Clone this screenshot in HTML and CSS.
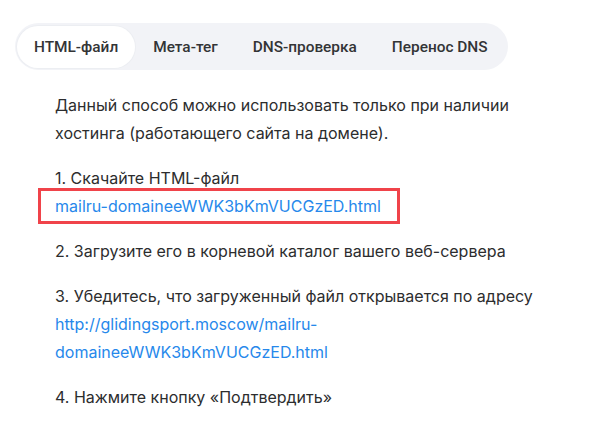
FILE: index.html
```html
<!DOCTYPE html>
<html>
<head>
  <title>Подтверждение домена</title>
  <link rel="stylesheet" href="styles.css">
</head>
<body>
  <div class="page">
    <div class="tabs">
      <div class="tab active">HTML-файл</div>
      <div class="tab">Мета-тег</div>
      <div class="tab">DNS-проверка</div>
      <div class="tab">Перенос DNS</div>
    </div>

    <div class="content">
      <p>Данный способ можно использовать только при наличии<br>хостинга (работающего сайта на домене).</p>
      <p>1. Скачайте HTML-файл<br>
        <a class="link marked" href="#">mailru-domaineeWWK3bKmVUCGzED.html</a></p>
      <p>2. Загрузите его в корневой каталог вашего веб-сервера</p>
      <p>3. Убедитесь, что загруженный файл открывается по адресу<br>
        <a class="link" href="#">http://glidingsport.moscow/mailru-<br>domaineeWWK3bKmVUCGzED.html</a></p>
      <p>4. Нажмите кнопку «Подтвердить»</p>
    </div>
  </div>
</body>
</html>
```

FILE: styles.css
```css
body {
  margin: 0;
  padding: 0;
  background: #ffffff;
  font-family: Inter, "Noto Sans", sans-serif;
  color: #2c2d2e;
}
.page {
  padding: 23px 0 0 15px;
}
.tabs {
  display: inline-flex;
  gap: 1px;
  background-color: #f2f3f7;
  border-radius: 24px;
  padding: 3px 3px 2px 2px;
}
.tab {
  padding: 0 17px;
  height: 42px;
  line-height: 42px;
  font-family: Roboto, "Noto Sans", sans-serif;
  font-size: 15.4px;
  font-weight: 500;
  border-radius: 21px;
  white-space: nowrap;
  color: #333436;
}
.tab.active {
  background-color: #ffffff;
  box-shadow: 0 0 0 1px #eceef2;
}
.content {
  padding: 21px 0 0 40px;
  width: 520px;
}
.content p {
  margin: 0 0 17px;
  font-size: 16px;
  line-height: 28px;
}
.link {
  color: #2688eb;
  text-decoration: none;
}
.marked {
  position: relative;
}
.marked::after {
  content: "";
  position: absolute;
  top: -8px;
  bottom: -8px;
  left: -17px;
  right: -19px;
  border: 3px solid #f0434a;
}
```
